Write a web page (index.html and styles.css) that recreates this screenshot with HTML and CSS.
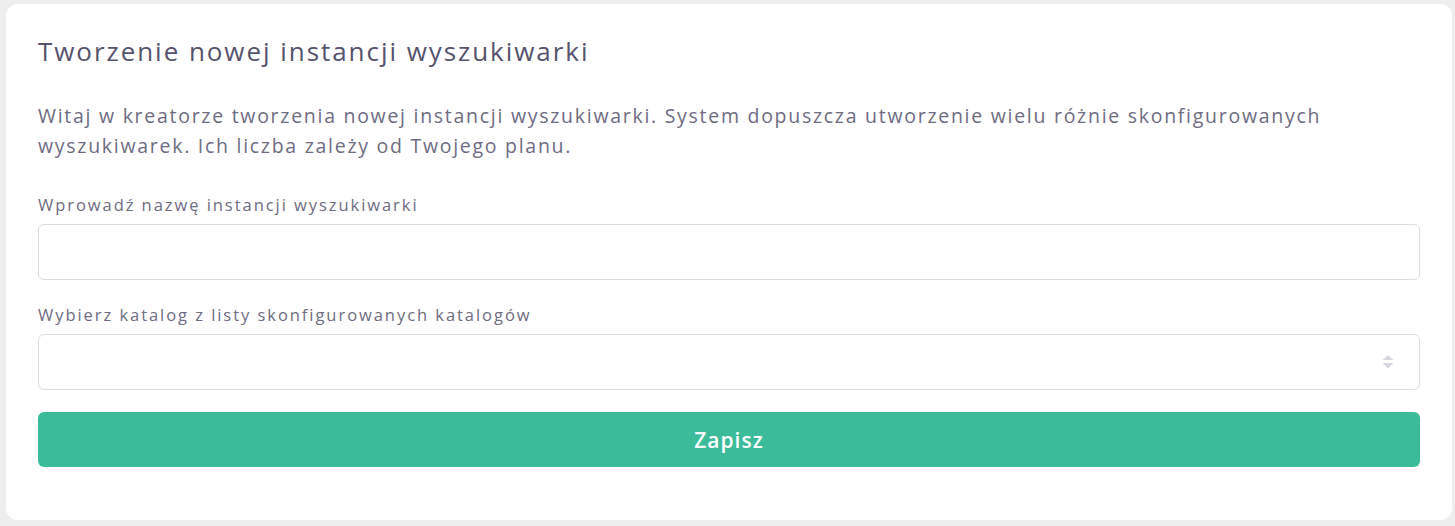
FILE: index.html
```html
<!DOCTYPE html>
<html lang="pl">
<head>
<meta charset="utf-8">
<title>Tworzenie nowej instancji wyszukiwarki</title>
<link rel="stylesheet" href="styles.css">
</head>
<body>
<div class="page">
  <div class="card">
    <h1 class="title">Tworzenie nowej instancji wyszukiwarki</h1>
    <p class="intro">Witaj w kreatorze tworzenia nowej instancji wyszukiwarki. System dopuszcza utworzenie wielu różnie skonfigurowanych wyszukiwarek. Ich liczba zależy od Twojego planu.</p>
    <div class="field">
      <label class="label">Wprowadź nazwę instancji wyszukiwarki</label>
      <input class="input" type="text">
    </div>
    <div class="field">
      <label class="label">Wybierz katalog z listy skonfigurowanych katalogów</label>
      <div class="select">
        <svg class="arrows" width="12" height="16" viewBox="0 0 12 16"><path d="M6 1 L11.5 6 L0.5 6 Z" fill="#d8d6e0"/><path d="M0.5 9 L11.5 9 L6 14.5 Z" fill="#d8d6e0"/></svg>
      </div>
    </div>
    <button class="btn">Zapisz</button>
  </div>
</div>
</body>
</html>
```
FILE: styles.css
```css
html, body { margin: 0; padding: 0; }
body {
  background: #eeeeee;
  font-family: "Open Sans", "DejaVu Sans", sans-serif;
  width: 1455px;
  height: 526px;
  overflow: hidden;
}
.page { padding: 4px 3px 0 6px; }
.card {
  background: #ffffff;
  border-radius: 12px;
  padding: 31px 32px 53px 32px;
  display: flex;
  flex-direction: column;
}
.title {
  margin: 0;
  font-size: 26px;
  font-weight: 400;
  color: #56536d;
  line-height: 32px;
  letter-spacing: 1.95px;
}
.intro {
  margin: 34px 0 0 0;
  font-size: 19.5px;
  line-height: 30px;
  color: #6e6c82;
  letter-spacing: 1.72px;
}
.field { display: flex; flex-direction: column; margin-top: 33px; }
.field + .field { margin-top: 24px; }
.label {
  font-size: 16.5px;
  line-height: 22px;
  color: #6e6c82;
  letter-spacing: 1.95px;
  margin-bottom: 8px;
}
.input, .select {
  box-sizing: border-box;
  height: 56px;
  border: 1px solid #dcdae3;
  border-radius: 6px;
  background: #fff;
  width: 100%;
  margin: 0;
}
.select { display: flex; align-items: center; justify-content: flex-end; padding-right: 25px; }
.btn {
  margin-top: 22px;
  height: 55px;
  border: none;
  border-radius: 6px;
  background: #3bbb9a;
  color: #ffffff;
  font-family: inherit;
  font-size: 21px;
  font-weight: 600;
  letter-spacing: 1px;
}
```
